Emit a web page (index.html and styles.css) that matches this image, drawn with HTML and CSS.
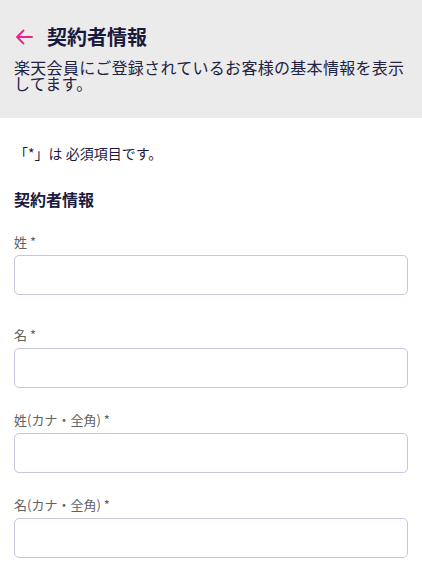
FILE: index.html
```html
<!DOCTYPE html>
<html lang="ja">
<head>
<meta charset="utf-8">
<link rel="stylesheet" href="styles.css">
</head>
<body>
<header class="head">
  <div class="head-row">
    <svg class="back" width="18" height="16" viewBox="0 0 18 16" aria-hidden="true">
      <path d="M17 8H2.5M8.5 1.5L2 8l6.5 6.5" fill="none" stroke="#f0208c" stroke-width="1.8" stroke-linecap="round" stroke-linejoin="round"/>
    </svg>
    <h1 class="title">契約者情報</h1>
  </div>
  <p class="desc">楽天会員にご登録されているお客様の基本情報を表示してます。</p>
</header>
<main class="body">
  <p class="note">「*」は 必須項目です。</p>
  <h2 class="section">契約者情報</h2>
  <div class="field field-first">
    <label class="label">姓 *</label>
    <input class="input" type="text">
  </div>
  <div class="field field-second">
    <label class="label">名 *</label>
    <input class="input" type="text">
  </div>
  <div class="field">
    <label class="label">姓(カナ・全角) *</label>
    <input class="input" type="text">
  </div>
  <div class="field">
    <label class="label">名(カナ・全角) *</label>
    <input class="input" type="text">
  </div>
</main>
</body>
</html>
```
FILE: styles.css
```css
* { box-sizing: border-box; }
html, body { margin: 0; padding: 0; background: #fff; }
body {
  font-family: "Noto Sans CJK JP", "Noto Sans", sans-serif;
  color: #1c1a3e;
}
.head {
  background: #ebebeb;
  padding: 24px 14px 27px;
}
.head-row {
  display: flex;
  align-items: center;
  gap: 14px;
  height: 26px;
}
.back { flex: none; margin-left: 1px; }
.title {
  margin: 0;
  font-size: 20px;
  font-weight: 700;
  line-height: 26px;
  color: #1a1a3f;
}
.desc {
  margin: 9px 0 0;
  font-size: 16px;
  line-height: 16px;
  letter-spacing: 0.3px;
  color: #232241;
}
.body { padding: 25px 14px 0; }
.note {
  margin: 0;
  font-size: 14px;
  line-height: 20px;
  color: #1c1a3e;
}
.section {
  margin: 25px 0 0;
  font-size: 16px;
  font-weight: 700;
  line-height: 22px;
  color: #1a1a3f;
}
.field { display: flex; flex-direction: column; margin-top: 24px; }
.field-first { margin-top: 24px; }
.field-second { margin-top: 32px; }
.label {
  font-size: 13px;
  line-height: 16px;
  color: #626262;
  margin-bottom: 5px;
}
.input {
  height: 40px;
  width: 100%;
  border: 1px solid #c9c5dc;
  border-radius: 5px;
  background: #fff;
  font-size: 14px;
  padding: 0 10px;
}
```
